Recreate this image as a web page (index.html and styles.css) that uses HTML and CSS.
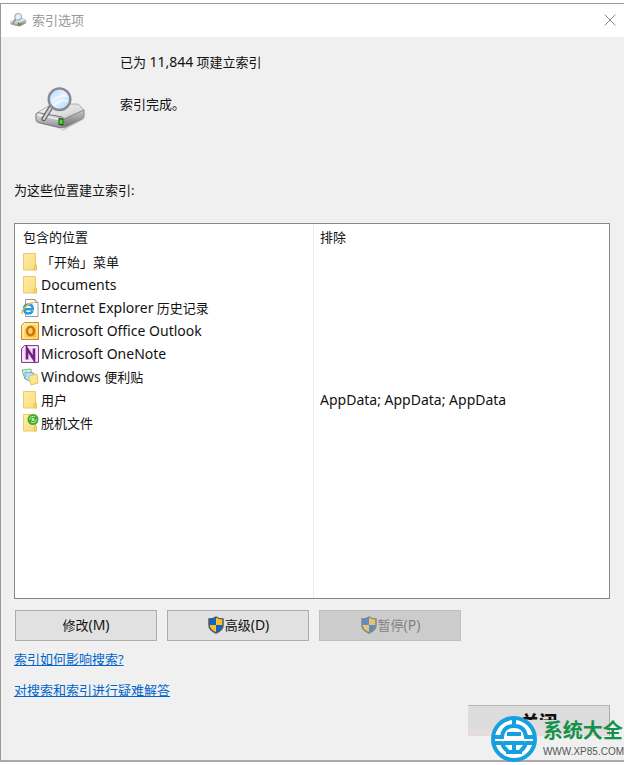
FILE: index.html
```html
<!DOCTYPE html>
<html lang="zh-CN">
<head>
<meta charset="utf-8">
<meta name="viewport" content="width=device-width, initial-scale=1">
<title>索引选项</title>
<link rel="stylesheet" href="styles.css">
</head>
<body>
<svg class="defs" aria-hidden="true">
  <defs>
    <linearGradient id="metal" x1="0" y1="0" x2="1" y2="1"><stop offset="0" stop-color="#f8f8f8"/><stop offset=".6" stop-color="#dedede"/><stop offset="1" stop-color="#b5b5b5"/></linearGradient>
    <linearGradient id="front" x1="0" y1="0" x2="0" y2="1"><stop offset="0" stop-color="#e4e4ea"/><stop offset="1" stop-color="#8a8a90"/></linearGradient>
    <linearGradient id="side" x1="0" y1="0" x2="0" y2="1"><stop offset="0" stop-color="#c9c9c9"/><stop offset="1" stop-color="#6c6c6c"/></linearGradient>
    <linearGradient id="lens" x1="0" y1="0" x2="1" y2="1"><stop offset="0" stop-color="#b5d8fa"/><stop offset=".5" stop-color="#e3f2ff"/><stop offset="1" stop-color="#a9d1f7"/></linearGradient>
    <linearGradient id="paper" x1="0" y1="0" x2="1" y2="1"><stop offset="0" stop-color="#ffeba6"/><stop offset="1" stop-color="#fbdc7c"/></linearGradient>
    <linearGradient id="gold" x1="0" y1="0" x2="1" y2="1"><stop offset="0" stop-color="#fff1bd"/><stop offset="1" stop-color="#f3ae20"/></linearGradient>
    <symbol id="drive" viewBox="0 0 54 46">
      <path d="M3 32 22 42 29 44 52 31 50 34 30 45 5 36Z" fill="#b5b5b5" opacity=".7"/>
      <path d="M3 27 18 18 45 18 51 24 31 34Z" fill="url(#metal)" stroke="#aaa"/>
      <path d="M2 28Q3 26 6 27L28 31Q31 32 31 34V41Q29 43 26 42L5 37Q2 36 2 34Z" fill="url(#front)" stroke="#777"/>
      <path d="M31 33 51 24V30Q51 32 49 33L31 42Z" fill="url(#side)" stroke="#888"/>
      <path d="M4 28 28 33V35L4 30Z" fill="#fff" opacity=".65"/>
      <path d="M25 32 30 33V40L25 39Z" fill="#184818"/><path d="M26 33.500 29 34v4.500l-3-.5Z" fill="#53e320"/>
      <path d="m18 20-8 13" stroke="#666" stroke-width="5" stroke-linecap="round"/><path d="m18 20-8 13" stroke="#ccc" stroke-width="2.500" stroke-linecap="round"/>
      <circle cx="26" cy="13" r="11" fill="url(#lens)" stroke="#858990" stroke-width="2.400"/>
      <path d="M18 16Q24 8 34 10M20 20Q26 13 35 15" fill="none" stroke="#fff" stroke-width="1.500" opacity=".7"/>
    </symbol>
    <symbol id="folder" viewBox="0 0 18 18">
      <path d="M2.500.5h12v12l1 .5v4h-13Z" fill="url(#paper)" stroke="#eccb6b"/>
      <path d="M13 17v-4l2-1.500.5.500v5Z" fill="#f6d36c" stroke="#e6c04f" stroke-width=".8"/>
    </symbol>
    <symbol id="shield" viewBox="0 0 18 18">
      <path d="M9 1Q6 3 2 3v6h7Z" fill="#0a67c4"/><path d="M9 1q3 2 7 2v6H9Z" fill="#ffbd28"/>
      <path d="M2 9h7v8Q2 14 2 9Z" fill="#ffc22c"/><path d="M16 9H9v8q7-3 7-8Z" fill="#0a67c4"/>
      <path d="M9 1Q6 3 2 3v6q0 5 7 8 7-3 7-8V3q-4 0-7-2Z" fill="none" stroke="#505963" stroke-width="1.500"/>
    </symbol>
  </defs>
</svg>
<main class="window">
  <header class="titlebar">
    <svg class="title-icon" aria-hidden="true"><use href="#drive"/></svg>
    <h1>索引选项</h1>
    <button class="dismiss" type="button" aria-label="关闭窗口"><svg viewBox="0 0 12 12" aria-hidden="true"><path d="m.5.5 11 11m0-11-11 11"/></svg></button>
  </header>
  <div class="content">
    <section class="summary">
      <svg class="drive-icon" aria-hidden="true"><use href="#drive"/></svg>
      <div class="status"><p>已为 <span class="latin">11,844</span> 项建立索引</p><p>索引完成。</p></div>
    </section>
    <h2 id="locations">为这些位置建立索引:</h2>
    <div class="list">
      <table aria-labelledby="locations">
        <thead><tr><th scope="col">包含的位置</th><th scope="col">排除</th></tr></thead>
        <tbody>
          <tr><td><span class="place"><svg aria-hidden="true"><use href="#folder"/></svg>「开始」菜单</span></td><td></td></tr>
          <tr><td><span class="place"><svg aria-hidden="true"><use href="#folder"/></svg><span class="latin">Documents</span></span></td><td></td></tr>
          <tr><td><span class="place"><svg viewBox="0 0 18 18" aria-hidden="true"><path d="M4.500.5H14l3 3v14H4.500Z" fill="#fff" stroke="#999"/><path d="M14 .5v3h3" fill="#ddd" stroke="#999"/><path d="M11.500 12q-1.200 2.500-4.200 2.500-4.300-.3-4.300-4.500 0-4.200 4.500-4.500 4.300.2 4.300 4.800H4" fill="none" stroke="#229be2" stroke-width="2.400"/><path d="M1.500 15q-2-3 4-8 5-4 7-3" fill="none" stroke="#f2bd2c" stroke-width="1.500"/></svg><span><span class="latin">Internet Explorer</span> 历史记录</span></span></td><td></td></tr>
          <tr><td><span class="place"><svg viewBox="0 0 18 18" aria-hidden="true"><path d="M3.500.5h14v17H.5v-14Z" fill="url(#gold)" stroke="#d98c12"/><path d="M4 2h12v14H2V4Z" fill="none" stroke="#fff3bd"/><ellipse cx="9.500" cy="9" rx="3.500" ry="4.300" fill="none" stroke="#c97804" stroke-width="2.600"/></svg><span class="latin">Microsoft Office Outlook</span></span></td><td></td></tr>
          <tr><td><span class="place"><svg viewBox="0 0 18 18" aria-hidden="true"><path d="M3.500.5h14v17H.5v-14Z" fill="#dfc0e4" stroke="#8d3a98"/><path d="M4 2h12v14H2V4Z" fill="#f0dff2" stroke="#fff"/><path d="M6 14.500v-11l7 11v-11" fill="none" stroke="#762080" stroke-width="2.600"/></svg><span class="latin">Microsoft OneNote</span></span></td><td></td></tr>
          <tr><td><span class="place"><svg viewBox="0 0 18 18" aria-hidden="true"><path d="m1 2 9-1 1 8-7 2Z" fill="#d8f5da" stroke="#65bf7b"/><path d="m4 4 9 1-2 9-7-3Z" fill="#b7def8" stroke="#69ade0"/><path d="m8 8 8-2 1 9-7 2Z" fill="#ffe68c" stroke="#e4c660"/></svg><span><span class="latin">Windows</span> 便利贴</span></span></td><td></td></tr>
          <tr><td><span class="place"><svg aria-hidden="true"><use href="#folder"/></svg>用户</span></td><td class="latin">AppData; AppData; AppData</td></tr>
          <tr><td><span class="place"><svg viewBox="0 0 18 18" aria-hidden="true"><use href="#folder"/><circle cx="12" cy="5.500" r="5.500" fill="#42ad32"/><path d="M8.500 5.500A3.500 3.500 0 0 1 14 3m1.500 2.500A3.500 3.500 0 0 1 10 8" fill="none" stroke="#c5f1b6"/><circle cx="12" cy="5.500" r="1.500" fill="#c5f1b6"/></svg>脱机文件</span></td><td></td></tr>
        </tbody>
      </table>
    </div>
    <div class="actions">
      <button type="button">修改<span class="latin">(M)</span></button>
      <button type="button"><svg aria-hidden="true"><use href="#shield"/></svg>高级<span class="latin">(D)</span></button>
      <button type="button" disabled><svg aria-hidden="true"><use href="#shield"/></svg>暂停<span class="latin">(P)</span></button>
    </div>
    <nav class="links"><a href="#effects">索引如何影响搜索?</a><a href="#troubleshoot">对搜索和索引进行疑难解答</a></nav>
    <footer><button type="button"><span>关闭</span></button></footer>
  </div>
  <div class="brand">
    <svg viewBox="0 0 46 46" aria-hidden="true">
      <circle cx="23" cy="23" r="21" fill="#fff" stroke="#16a0df" stroke-width="4"/>
      <path d="M2 21h9Q12 10 23 10t12 11h9M23 2v8" fill="none" stroke="#16a0df" stroke-width="4"/>
      <path d="M2 27h9q2 6 6 8m27-8h-9q-2 6-6 8" fill="none" stroke="#16a0df" stroke-width="4"/>
      <path d="M16 18h14M13 27h20M23 27v10M15 36h16" fill="none" stroke="#16a0df" stroke-width="4"/>
    </svg>
    <div><strong>系统大全</strong><small>WWW.XP85.COM</small></div>
  </div>
</main>
</body>
</html>
```
FILE: styles.css
```css
* { box-sizing: border-box; }
body {
  margin: 0;
  padding: 3px 3px 3px 0;
  background: #fff;
  color: #111;
  font: 13px/20px "Noto Sans", "Noto Sans CJK SC", sans-serif;
}
h1, h2, p { margin: 0; font-size: 13px; font-weight: 400; }
button { font: inherit; color: inherit; }
.latin { font-size: 14px; line-height: 18px; }
.defs { position: absolute; width: 0; height: 0; }
.window {
  position: relative;
  display: flex;
  flex-direction: column;
  min-height: calc(100vh - 6px);
  background: #f0f0f0;
  border: 1px solid #999;
  border-right: 0;
  border-bottom: 2px solid #aaa;
}
.titlebar {
  display: flex;
  align-items: center;
  gap: 5px;
  height: 33px;
  padding: 0 8px 2px 9px;
  background: #fff;
  color: #999;
}
.title-icon { width: 17px; height: 16px; }
.dismiss {
  display: flex;
  margin-left: auto;
  padding: 0;
  border: 0;
  background: none;
}
.dismiss svg { width: 12px; height: 12px; fill: none; stroke: #888; }
.content {
  display: flex;
  flex: 1;
  flex-direction: column;
  padding: 15px 14px 24px 13px;
}
.summary { display: flex; gap: 33px; padding-left: 20px; }
.drive-icon { width: 53px; height: 46px; margin-top: 34px; }
.status { display: grid; align-content: start; gap: 22px; }
h2 { margin: 48px 0 23px; }
.list {
  display: flex;
  flex: 1;
  min-height: 376px;
  background: linear-gradient(90deg, transparent 298px, #eaeef3 298px, #eaeef3 299px, transparent 299px), #fff;
  border: 1px solid #828790;
}
table {
  width: 100%;
  align-self: flex-start;
  border-collapse: collapse;
  table-layout: fixed;
}
th, td { height: 23px; padding: 0 6px; text-align: left; font-weight: 400; }
th { height: 26px; padding-left: 8px; }
th:first-child { width: 299px; }
th:last-child, td:last-child { padding-left: 6px; }
.place { display: flex; align-items: center; gap: 2px; }
.place svg { width: 18px; height: 18px; flex: none; }
.actions { display: flex; gap: 10px; margin: 11px 0 0 1px; }
.actions button, footer button {
  display: flex;
  align-items: center;
  justify-content: center;
  width: 142px;
  height: 31px;
  padding: 0 0 2px;
  background: #e1e1e1;
  border: 1px solid #adadad;
}
.actions svg { width: 18px; height: 18px; }
.actions button:disabled { background: #ccc; border-color: #bfbfbf; color: #838383; }
.actions button:disabled svg { opacity: .6; }
.links { display: flex; flex-direction: column; align-items: flex-start; gap: 11px; margin-top: 8px; }
a { color: #0066cc; text-decoration: underline; }
footer { display: flex; justify-content: flex-end; margin-top: 5px; }
footer button { align-items: flex-start; background: linear-gradient(#dcdcdc 65%, #e9dde0); border-color: #b8b8b8 #aaa #ddd #ddd; }
footer span { height: 7px; margin-top: 7px; overflow: hidden; font-size: 18px; font-weight: 900; line-height: 18px; }
.brand { position: absolute; right: 0; bottom: -2px; display: flex; align-items: center; gap: 6px; }
.brand svg { width: 46px; height: 46px; }
.brand div { display: grid; }
.brand strong { color: #12924a; font-size: 20px; line-height: 26px; }
.brand small { color: #555; font: 10px/16px "Liberation Sans", sans-serif; }
```
